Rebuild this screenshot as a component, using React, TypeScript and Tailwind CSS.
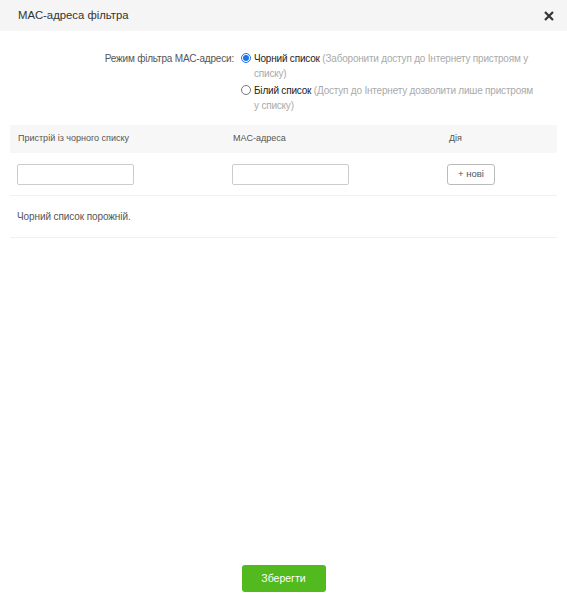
import React from "react";

export default function App() {
  return (
    <div className="w-[567px] h-[600px] bg-white flex flex-col text-[#333]" style={{ fontFamily: '"Liberation Sans", Arial, sans-serif' }}>
      <div className="h-[31px] bg-[#f5f5f5] flex items-center justify-between pl-[18px] pr-[13px]">
        <span className="text-[11.3px] text-[#333]">MAC-адреса фільтра</span>
        <svg width="10" height="10" viewBox="0 0 10 10">
          <path d="M1 1L9 9M9 1L1 9" stroke="#333" strokeWidth="2.2" />
        </svg>
      </div>
      <div className="flex-1 flex flex-col px-[10px]">
        <div className="flex mt-[20px] leading-[15px]">
          <div className="w-[225px] text-right pr-[1px] text-[10px] tracking-[-0.2px] text-[#555]">Режим фільтра MAC-адреси:</div>
          <div className="flex flex-col ml-[6px] w-[300px] gap-[2px] text-[10px] tracking-[-0.2px]">
            <label className="flex items-start">
              <span className="mt-[2px] w-[10px] h-[10px] rounded-full border border-[#1a73e8] flex items-center justify-center shrink-0">
                <span className="w-[6px] h-[6px] rounded-full bg-[#1a73e8]" />
              </span>
              <span className="ml-[3px] w-[285px]">
                <span className="text-[#222]">Чорний список</span>
                <span className="text-[#aaa]"> (Заборонити доступ до Інтернету пристроям у списку)</span>
              </span>
            </label>
            <label className="flex items-start">
              <span className="mt-[2px] w-[10px] h-[10px] rounded-full border border-[#777] shrink-0" />
              <span className="ml-[3px] w-[285px]">
                <span className="text-[#222]">Білий список</span>
                <span className="text-[#aaa]"> (Доступ до Інтернету дозволити лише пристроям у списку)</span>
              </span>
            </label>
          </div>
        </div>
        <div className="mt-[12px] h-[28px] bg-[#f7f7f7] grid grid-cols-[215px_216px_1fr] items-center text-[9px] text-[#555]">
          <span className="pl-[8px]">Пристрій із чорного списку</span>
          <span className="pl-[8px]">MAC-адреса</span>
          <span className="pl-[8px]">Дія</span>
        </div>
        <div className="h-[43px] grid grid-cols-[215px_216px_1fr] items-center border-b border-[#f0f0f0]">
          <div className="pl-[7px]">
            <div className="w-[117px] h-[21px] border border-[#ccc] rounded-[2px] bg-white" />
          </div>
          <div className="pl-[7px]">
            <div className="w-[117px] h-[21px] border border-[#ccc] rounded-[2px] bg-white" />
          </div>
          <div className="pl-[6px]">
            <div className="w-[48px] h-[21px] border border-[#bbb] rounded-[3px] bg-white flex items-center justify-center text-[9.5px] text-[#555]">+ нові</div>
          </div>
        </div>
        <div className="h-[42px] flex items-center pl-[7px] text-[10px] tracking-[-0.1px] text-[#555] border-b border-[#f0f0f0]">Чорний список порожній.</div>
        <div className="flex-1" />
        <div className="flex justify-center mb-[8px]">
          <button className="w-[84px] h-[27px] bg-[#52b91e] rounded-[3px] text-white text-[10.5px]">Зберегти</button>
        </div>
      </div>
    </div>
  );
}
